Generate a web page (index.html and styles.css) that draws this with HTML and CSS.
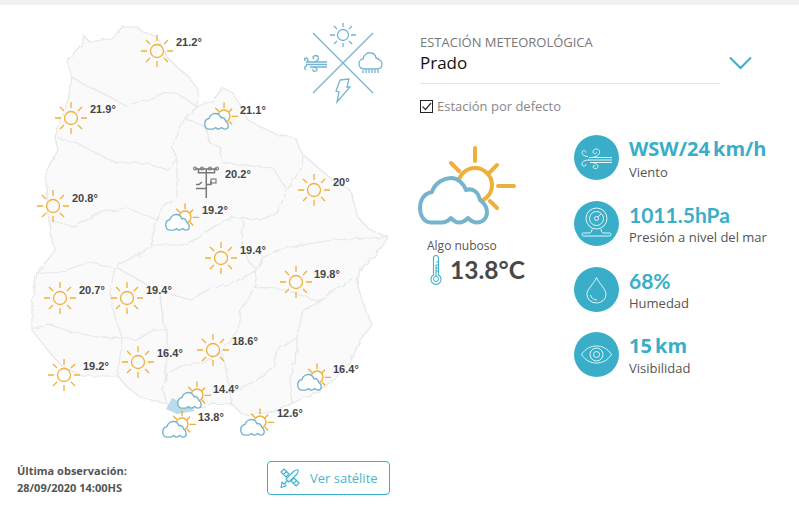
FILE: index.html
```html
<!DOCTYPE html>
<html lang="es">
<head>
<meta charset="utf-8">
<title>Estación meteorológica</title>
<link rel="stylesheet" href="styles.css">
</head>
<body>
<div class="topbar"></div>
<div class="page">
  <section class="left">
    <svg class="map" viewBox="0 5 415 445" width="415" height="445" aria-label="Mapa">
      <defs>
        <filter id="rough" x="-5%" y="-5%" width="110%" height="110%">
          <feTurbulence type="fractalNoise" baseFrequency="0.13" numOctaves="2" seed="4"/>
          <feDisplacementMap in="SourceGraphic" scale="4"/>
        </filter>
        <symbol id="sun" viewBox="-17 -17 34 34" overflow="visible">
          <g class="sun-line">
            <circle r="6.5"/>
            <path d="M0-16V-10M0 10V16M-16 0H-10M10 0H16M-11-11L-7-7M7-7L11-11M-11 11L-7 7M7 7L11 11"/>
          </g>
        </symbol>
        <symbol id="cloudsun" viewBox="415 145 105 82" overflow="visible">
          <g class="big-sun">
            <circle cx="475" cy="185" r="17"/>
            <path d="M475 148V161M498 186H514M490 172L497 165M490 201L497 208M451 163L459 171"/>
          </g>
          <path class="big-cloud" d="M431 222.5C423 222.5 420 214 420 208C420 199 425 193 432 192C435 182 445 178 451 178C458 178 464 184 466 190C472 188 478 191 480 200C484 203 487 207 487 212C487 219 482 222.5 477 222.5C473 222.5 471 221 468 218C465 221 462 222.5 459 222.5C455 222.5 453 220 451 218C448 221 445 222.5 442 222.5Z"/>
        </symbol>
      </defs>

      <g filter="url(#rough)">
        <path class="land" d="M117 33L122 27L137 27L143 32L157 37L167 57L177 67L190 78L198 90L197 107L213 100L223 88L233 93L248 120L263 128L278 135L295 138L303 155L333 180L350 190L358 217L370 230L388 237L380 250L370 260L360 270L357 283L362 300L372 325L360 340L350 363L333 380L320 390L293 403L267 413L243 415L233 405L210 404L193 410L167 404L140 397L127 387L118 376L83 376L63 367L50 353L42 343L32 330L32 303L37 272L50 257L55 250L50 233L45 173L58 150L55 137L68 100L72 77L67 60L83 43L83 35L90 42L113 38Z"/>
        <path class="border" d="M72 77L85 85L100 92L125 105L150 100L165 92L180 95L197 107"/>
        <path class="border" d="M197 107L185 118L172 147L177 158L168 170L147 163L117 163L90 150L77 143L58 138"/>
        <path class="border" d="M177 160L177 197L160 210L157 220L127 208L97 213L75 227L50 220"/>
        <path class="border" d="M185 118L205 127L210 143L220 147L222 163L273 168L287 190L277 213L260 220L233 217L213 227L200 237L183 245L153 245L133 257L115 267"/>
        <path class="border" d="M160 210L150 245"/>
        <path class="border" d="M303 155L302 167L287 190"/>
        <path class="border" d="M243 220L242 247L250 263L257 270L233 283L213 287L190 300L167 293L157 293L143 282L115 267"/>
        <path class="border" d="M388 237L333 240L290 247L263 257L257 270L255 287L240 313L240 327L223 350L203 363L183 365L168 373L163 390L167 404"/>
        <path class="border" d="M353 280L333 290L320 302L303 310L297 337L297 353L290 377L292 403"/>
        <path class="border" d="M255 287L267 288L287 290L320 302"/>
        <path class="border" d="M297 338L277 350L273 367L257 380L230 393L227 373L222 353M230 393L232 405"/>
        <path class="border" d="M160 293L163 323L167 330L167 357L165 383"/>
        <path class="border" d="M115 267L110 293L115 317L122 338L137 340L153 330L167 330M122 338L118 376"/>
        <path class="border" d="M32 330L50 325L72 332L97 337L122 338"/>
        <path class="border" d="M37 272L57 273L90 262L115 268"/>
      </g>
      <path class="capital" d="M172 398L166 409L177 414L195 411L190 405L180 402Z"/>

      <use href="#sun" x="140" y="34" width="34" height="34"/>
      <use href="#sun" x="54" y="101" width="34" height="34"/>
      <use href="#sun" x="36" y="189" width="34" height="34"/>
      <use href="#sun" x="297" y="173" width="34" height="34"/>
      <use href="#sun" x="204" y="241" width="34" height="34"/>
      <use href="#sun" x="279" y="265" width="34" height="34"/>
      <use href="#sun" x="43" y="281" width="34" height="34"/>
      <use href="#sun" x="110" y="281" width="34" height="34"/>
      <use href="#sun" x="196" y="333" width="34" height="34"/>
      <use href="#sun" x="121" y="345" width="34" height="34"/>
      <use href="#sun" x="47" y="358" width="34" height="34"/>

      <use href="#cloudsun" x="203" y="102" width="36.8" height="28.7"/>
      <use href="#cloudsun" x="164" y="203" width="36.8" height="28.7"/>
      <use href="#cloudsun" x="296" y="363" width="36.8" height="28.7"/>
      <use href="#cloudsun" x="176" y="381" width="36.8" height="28.7"/>
      <use href="#cloudsun" x="161" y="410" width="36.8" height="28.7"/>
      <use href="#cloudsun" x="239" y="408" width="36.8" height="28.7"/>

      <g class="station">
        <path d="M206.3 169V198M195 169H217M198.500 169V172.700H214.500V169M196 188.500H206.300V192M206.300 184.500H211V181M196 184.500H199L202 182"/>
        <rect x="211" y="179" width="5" height="4"/>
        <circle cx="195" cy="168.500" r="1.500"/><circle cx="202" cy="168.500" r="1.500"/><circle cx="210" cy="168.500" r="1.500"/><circle cx="217" cy="168.500" r="1.500"/>
      </g>

      <g class="temp">
        <text x="176" y="46">21.2°</text>
        <text x="90" y="113">21.9°</text>
        <text x="240" y="114">21.1°</text>
        <text x="225" y="178">20.2°</text>
        <text x="333" y="186">20°</text>
        <text x="72" y="202">20.8°</text>
        <text x="202" y="214">19.2°</text>
        <text x="240" y="254">19.4°</text>
        <text x="314" y="278">19.8°</text>
        <text x="79" y="294">20.7°</text>
        <text x="146" y="294">19.4°</text>
        <text x="232" y="345">18.6°</text>
        <text x="157" y="357">16.4°</text>
        <text x="83" y="370">19.2°</text>
        <text x="333" y="373">16.4°</text>
        <text x="213" y="393">14.4°</text>
        <text x="277" y="417">12.6°</text>
        <text x="198" y="421">13.8°</text>
      </g>

      <g class="compass">
        <path d="M313 33L373 93M373 33L313 93"/>
        <circle cx="343" cy="35" r="5.500"/>
        <path d="M343 23V27M343 43V47M330 35H335M351 35H356M334 26L337 29M349 41L352 44M352 26L349 29M337 41L334 44"/>
        <path d="M327 62H306M327 64.500H306M327 67H310M314 62C319 61 320 56 316 55.500C313 55.500 312 58 314 59M306 60C304 61 304 58 306 58C308 58 309 60 307 62M306 70C304 69 304 66 307 66M313 69C312 72 316 72 317 70C317 68 315 67 312 67"/>
        <path d="M365 69C360 69 359 66 359 64C359 61 361 59 363 59C364 54 368 52 371 53C374 53 376 56 376 58C380 59 382 62 382 64C382 67 380 69 377 69Z"/>
        <path d="M363 70V73M366 70V73M369 70V73M372 70V73M375 70V73M378 70V73"/>
        <path d="M340 80L349 79L347 87L350 87L337 102L339 92L336 91Z"/>
      </g>
    </svg>

    <footer class="foot">
      <p class="obs">Última observación:<br>28/09/2020 14:00HS</p>
      <a class="sat" href="#">
        <svg class="sat-icon" viewBox="0 0 22 22" width="22" height="22" aria-hidden="true">
          <path d="M7 12L14.500 4.500C16 3 18.500 2.500 19 3C19.500 3.500 19 6 17.500 7.500L10 15Z"/>
          <path d="M2 5L5 2L10 7L7 10ZM4.500 7.500L7.500 4.500"/>
          <path d="M12 14L15 11L20 16L17 19ZM14.500 16.500L17.500 13.500"/>
          <path d="M3 15L7 19L2 20.500ZM5 17L8.500 13.500"/>
        </svg>
        <span>Ver satélite</span>
      </a>
    </footer>
  </section>

  <section class="right">
    <div class="select">
      <div class="select-box">
        <div class="select-label">ESTACIÓN METEOROLÓGICA</div>
        <div class="select-value">Prado</div>
      </div>
      <svg class="chevron" viewBox="0 0 24 14" width="24" height="14" aria-hidden="true"><path d="M1 1.500L11.500 12L22 1.500"/></svg>
    </div>
    <label class="default">
      <svg class="check" viewBox="0 0 13 13" width="13" height="13" aria-hidden="true">
        <rect x="0.500" y="0.500" width="12" height="12"/>
        <path d="M2.500 6.500L5.500 9.500L11 3"/>
      </svg>
      <span>Estación por defecto</span>
    </label>

    <div class="body">
      <div class="now">
        <svg class="now-icon" viewBox="415 145 105 82" width="105" height="82" aria-hidden="true">
          <use href="#cloudsun" x="415" y="145" width="105" height="82"/>
        </svg>
        <div class="now-text">Algo nuboso</div>
        <div class="now-temp">
          <svg class="thermo" viewBox="0 0 12 30" width="12" height="30" aria-hidden="true">
            <path d="M3.500 20V3A2.500 2.500 0 0 1 8.500 3V20A5 5 0 1 1 3.500 20Z"/>
            <circle cx="6" cy="24" r="2.500"/>
            <path d="M6 10V22M6 7H8M6 10H8M6 13H8M6 16H8"/>
          </svg>
          <span>13.8°C</span>
        </div>
      </div>

      <ul class="metrics">
        <li class="metric">
          <svg class="disc" viewBox="0 0 45 45" width="45" height="45" aria-hidden="true">
            <circle class="disc-bg" cx="22.500" cy="22.500" r="22.500"/>
            <g class="disc-line">
              <path d="M15 22.500H38M14 25H38M16 27.500H38"/>
              <path d="M17 22.500C22 22 26 20 25.500 16.500C25 13 19.500 13 19 17C19 19 22 19.500 22.500 17.500"/>
              <path d="M14 21.500C11 21.500 8 20 8 17.500C8 15 12 15 12 17.500"/>
              <path d="M15 25C11 25 8 26.500 8 29C8 32 12 32 12 29"/>
              <path d="M17 27.500C21 27.500 24 29 24 31.500C24 34 20 34.500 19 32C19 30.500 21 30 21.500 31"/>
            </g>
          </svg>
          <div class="metric-text"><div class="value">WSW/24 km/h</div><div class="label">Viento</div></div>
        </li>
        <li class="metric">
          <svg class="disc" viewBox="0 0 45 45" width="45" height="45" aria-hidden="true">
            <circle class="disc-bg" cx="22.500" cy="22.500" r="22.500"/>
            <g class="disc-line">
              <circle cx="22.500" cy="17.500" r="10.500"/>
              <circle cx="22.500" cy="17.500" r="7"/>
              <circle cx="22.500" cy="17.500" r="2"/>
              <path d="M24 16L27 13"/>
              <path d="M18 28C18 31 17 32 15 32H9.500A1.500 1.500 0 0 0 9.500 35H35.500A1.500 1.500 0 0 0 35.500 32H30C28 32 27 31 27 28"/>
            </g>
          </svg>
          <div class="metric-text"><div class="value alt">1011.5hPa</div><div class="label">Presión a nivel del mar</div></div>
        </li>
        <li class="metric">
          <svg class="disc" viewBox="0 0 45 45" width="45" height="45" aria-hidden="true">
            <circle class="disc-bg" cx="22.500" cy="22.500" r="22.500"/>
            <g class="disc-line">
              <path d="M22.500 10.500C19 18 13 22 13 27.500A9.500 8.500 0 0 0 32 27.500C32 22 26 18 22.500 10.500Z"/>
              <path d="M16.500 28A7 6 0 0 0 23 33"/>
            </g>
          </svg>
          <div class="metric-text"><div class="value alt">68%</div><div class="label">Humedad</div></div>
        </li>
        <li class="metric">
          <svg class="disc" viewBox="0 0 45 45" width="45" height="45" aria-hidden="true">
            <circle class="disc-bg" cx="22.500" cy="22.500" r="22.500"/>
            <g class="disc-line">
              <path d="M7.500 22.500C12 16 17 14 22.500 14C28 14 33 16 37.500 22.500C33 29 28 31 22.500 31C17 31 12 29 7.500 22.500Z"/>
              <circle cx="22.500" cy="22.500" r="6.500"/>
              <circle cx="22.500" cy="22.500" r="3"/>
            </g>
          </svg>
          <div class="metric-text metric-text-last"><div class="value">15 km</div><div class="label">Visibilidad</div></div>
        </li>
      </ul>
    </div>
  </section>
</div>
</body>
</html>
```

FILE: styles.css
```css
* { box-sizing: border-box; }

html, body { margin: 0; padding: 0; background: #fff; }

body {
  width: 799px;
  height: 505px;
  overflow: hidden;
  font-family: "Open Sans", sans-serif;
  color: #555;
}

.topbar { height: 5px; background: #f1f1f1; }

.page { display: flex; }

.left { width: 415px; flex: none; }

.map { display: block; }

.land { fill: #fafafa; stroke: #e6e6e6; stroke-width: 1.2; stroke-linejoin: round; }
.border { fill: none; stroke: #e6e6e6; stroke-width: 1.2; stroke-linejoin: round; }
.capital { fill: #b9dde8; }

.sun-line circle, .sun-line path { fill: none; stroke: #f0b03c; stroke-width: 1.3; }

.big-sun circle, .big-sun path { fill: #fff; stroke: #eeb03c; stroke-width: 4; stroke-linecap: round; }
.big-cloud { fill: #fff; stroke: #76b3cd; stroke-width: 4; stroke-linejoin: round; }

.station path { fill: none; stroke: #777; stroke-width: 1.5; }
.station rect, .station circle { fill: none; stroke: #777; stroke-width: 1.1; }

.temp text {
  font-family: "Liberation Sans", Arial, sans-serif;
  font-size: 11px;
  font-weight: 700;
  fill: #444;
}

.compass path, .compass circle { fill: none; stroke: #74b4cf; stroke-width: 1.3; }

.foot {
  display: flex;
  justify-content: space-between;
  align-items: center;
  height: 34px;
  margin-top: 11px;
  padding: 0 25px 0 17px;
}

.obs {
  margin: 2px 0 0;
  font-size: 11px;
  font-weight: 700;
  line-height: 17px;
  color: #555;
}

.sat {
  display: flex;
  align-items: center;
  gap: 9px;
  width: 123px;
  height: 34px;
  padding-left: 11px;
  border: 1px solid #3aaec8;
  border-radius: 4px;
  font-size: 13px;
  color: #4fb4cc;
  text-decoration: none;
}

.sat-icon { flex: none; }
.sat-icon path { fill: none; stroke: #3fb4cd; stroke-width: 1.1; stroke-linejoin: round; }

.right { flex: 1; padding-top: 28px; }

.select { display: flex; margin-left: 5px; }

.select-box { width: 300px; height: 51px; border-bottom: 1px solid #e4e4e4; }

.select-label { font-size: 13px; line-height: 18px; color: #777; }

.select-value { font-size: 17px; line-height: 24px; color: #111; }

.chevron { margin: 23px 0 0 9px; flex: none; }
.chevron path { fill: none; stroke: #3aaec8; stroke-width: 2; }

.default {
  display: flex;
  align-items: center;
  gap: 4px;
  height: 18px;
  margin: 13px 0 0 5px;
  font-size: 13px;
  color: #888;
}

.check { flex: none; }
.check rect { fill: #fff; stroke: #222; stroke-width: 1; }
.check path { fill: none; stroke: #333; stroke-width: 1.2; }

.body { display: flex; margin-top: 20px; }

.now { width: 159px; flex: none; padding-top: 10px; }

.now-icon { display: block; }

.now-text { margin: 10px 0 0 12px; font-size: 12px; line-height: 17px; color: #555; }

.now-temp { display: flex; align-items: center; gap: 8px; margin: 1px 0 0 15px; }

.thermo { flex: none; }
.thermo path { fill: none; stroke: #3cb0ca; stroke-width: 1.1; }
.thermo circle { fill: none; stroke: #3cb0ca; stroke-width: 1; }

.now-temp span {
  font-family: Lato, sans-serif;
  font-size: 24.5px;
  font-weight: 700;
  line-height: 30px;
  color: #484848;
}

.metrics {
  display: flex;
  flex-direction: column;
  gap: 21px;
  margin: 0;
  padding: 0;
  list-style: none;
}

.metric { display: flex; gap: 10px; height: 45px; }
.metric:last-child { margin-top: -1px; }

.metric-text { padding-top: 1px; }
.metric-text-last .label { margin-top: -1px; }

.disc { flex: none; }
.disc-bg { fill: #3aaec8; }
.disc-line path, .disc-line circle { fill: none; stroke: #e6f5f8; stroke-width: 1; }

.value {
  font-size: 20px;
  font-weight: 700;
  line-height: 26px;
  word-spacing: -2px;
  color: #3aaec8;
}

.value.alt { font-family: Lato, sans-serif; font-size: 21px; line-height: 25px; word-spacing: 0; }

.label { font-size: 13px; line-height: 20px; color: #555; }
```
